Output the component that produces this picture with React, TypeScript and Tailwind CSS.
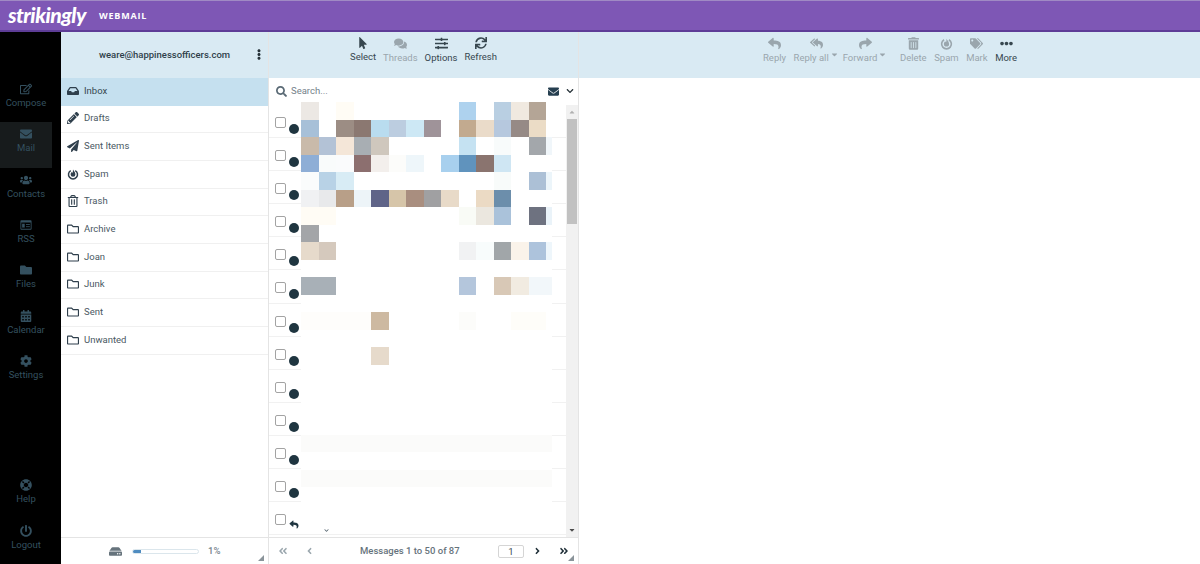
import React from "react";
import {
  FaRegEdit, FaEnvelope, FaUsers, FaHdd, FaFolder, FaCalendarAlt, FaCog, FaLifeRing, FaPowerOff,
  FaInbox, FaPencilAlt, FaPaperPlane, FaRegTrashAlt, FaRegFolder, FaMousePointer, FaComments,
  FaSlidersH, FaSync, FaReply, FaReplyAll, FaShare, FaTrashAlt, FaTags, FaEllipsisH, FaSearch,
  FaChevronDown, FaEllipsisV, FaAngleDoubleLeft, FaAngleLeft, FaAngleRight, FaAngleDoubleRight, FaCaretDown, FaCaretUp,
} from "react-icons/fa";

const SpamIcon = ({ className = "" }: { className?: string }) => (
  <svg viewBox="0 0 16 16" className={className} fill="none">
    <path d="M5 3.4A6 6 0 1 0 11 3.4" stroke="currentColor" strokeWidth="2" />
    <path d="M8 2C9 4 11.2 5.4 11.2 8.6A3.2 3.2 0 0 1 4.8 8.6C4.8 7 5.6 6 6.4 5.2C6.8 6 7.2 6.2 7.6 6.2C8 5 7.8 3.4 8 2Z" fill="currentColor" />
  </svg>
);

const RssIcon = ({ className = "" }: { className?: string }) => (
  <svg viewBox="0 0 14 12" className={className}>
    <path fillRule="evenodd" fill="currentColor" d="M1.5 0.5H12.5A1 1 0 0 1 13.5 1.5V10.5A1 1 0 0 1 12.5 11.5H1.5A1 1 0 0 1 0.5 10.5V1.5A1 1 0 0 1 1.5 0.5ZM1.5 3V10.5H12.5V3Z" />
    <rect x="2.5" y="4.5" width="3" height="4.5" fill="currentColor" />
    <rect x="7" y="5" width="4.5" height="1" fill="currentColor" />
    <rect x="7" y="7.5" width="4.5" height="1" fill="currentColor" />
  </svg>
);

const Handle = () => (
  <svg viewBox="0 0 6 6" className="absolute right-[4px] bottom-[3px] w-[6px] h-[6px] text-[#8a949a]">
    <path d="M6 0V6H0Z" fill="currentColor" />
  </svg>
);

const rail = [
  { l: "Compose", I: FaRegEdit },
  { l: "Mail", I: FaEnvelope, sel: true },
  { l: "Contacts", I: FaUsers },
  { l: "RSS", I: RssIcon },
  { l: "Files", I: FaFolder },
  { l: "Calendar", I: FaCalendarAlt },
  { l: "Settings", I: FaCog },
];

const folders = [
  { l: "Inbox", I: FaInbox, sel: true },
  { l: "Drafts", I: FaPencilAlt },
  { l: "Sent Items", I: FaPaperPlane },
  { l: "Spam", I: SpamIcon },
  { l: "Trash", I: FaRegTrashAlt },
  { l: "Archive", I: FaRegFolder },
  { l: "Joan", I: FaRegFolder },
  { l: "Junk", I: FaRegFolder },
  { l: "Sent", I: FaRegFolder },
  { l: "Unwanted", I: FaRegFolder },
];

const RailItem = ({ l, I, sel }: { l: string; I: any; sel?: boolean }) => (
  <div className={`w-[52px] h-[45.33px] flex flex-col items-center pt-[6px] shrink-0 text-[#34505f] ${sel ? "bg-[#171b1c]" : ""}`}>
    <I className="w-[12px] h-[12px]" />
    <span className="text-[9.5px] leading-[14px] mt-[1px]">{l}</span>
  </div>
);

const Tool = ({ l, I, off, caret, iconClass = "w-[13px] h-[13px]" }: { l: string; I: any; off?: boolean; caret?: boolean; iconClass?: string }) => (
  <div className={`flex flex-col items-center ${off ? "text-[#9aa6ad]" : "text-[#37474f]"}`}>
    <I className={`${iconClass} mt-[5px] mb-[1px]`} />
    <span className="text-[9.5px] leading-[14px] whitespace-nowrap flex items-start">
      {l}
      {caret && <FaCaretDown className="w-[9px] h-[9px] ml-[1px] -mt-[1px]" />}
    </span>
  </div>
);

// One entry per blurred cell: [row, column, colour class]
const cells: [number, number, string][] = [
  [0,0,"bg-[#ece8e4]"],[0,2,"bg-[#fffcf5]"],[0,9,"bg-[#aed2ee]"],[0,11,"bg-[#b9cfe2]"],[0,12,"bg-[#f0e9e0]"],[0,13,"bg-[#b4a596]"],
  [1,0,"bg-[#a7c0d8]"],[1,2,"bg-[#9c8d84]"],[1,3,"bg-[#8b7871]"],[1,4,"bg-[#b9dcef]"],[1,5,"bg-[#bccde0]"],[1,6,"bg-[#cde8f5]"],[1,7,"bg-[#9f9399]"],[1,9,"bg-[#c2aa8f]"],[1,10,"bg-[#eadbc9]"],[1,11,"bg-[#b6c8de]"],[1,12,"bg-[#968a86]"],[1,13,"bg-[#ebdcc6]"],
  [2,0,"bg-[#c9baaa]"],[2,1,"bg-[#b3c2d6]"],[2,2,"bg-[#f4e6d8]"],[2,3,"bg-[#a8aeb3]"],[2,4,"bg-[#cfc7bd]"],[2,9,"bg-[#c5e2f2]"],[2,11,"bg-[#f8fbfb]"],[2,13,"bg-[#a3a7ab]"],[2,14,"bg-[#f0f6fa]"],
  [3,0,"bg-[#8eaed6]"],[3,1,"bg-[#f9fbfb]"],[3,2,"bg-[#fafbfc]"],[3,3,"bg-[#8c6f6f]"],[3,4,"bg-[#f3efec]"],[3,5,"bg-[#fcfcfa]"],[3,6,"bg-[#eef6fa]"],[3,8,"bg-[#a8d0ee]"],[3,9,"bg-[#6093bd]"],[3,10,"bg-[#8a746f]"],[3,11,"bg-[#cfe6f3]"],
  [4,0,"bg-[#fafcfc]"],[4,1,"bg-[#b8d2e6]"],[4,2,"bg-[#d8ecf5]"],[4,11,"bg-[#f8fbfa]"],[4,13,"bg-[#acc0d6]"],[4,14,"bg-[#ecf5fa]"],
  [5,0,"bg-[#f0f1f3]"],[5,1,"bg-[#e8e9eb]"],[5,2,"bg-[#b89f88]"],[5,3,"bg-[#edf4f8]"],[5,4,"bg-[#5f6488]"],[5,5,"bg-[#d6c5a9]"],[5,6,"bg-[#a98e7f]"],[5,7,"bg-[#a0a0a2]"],[5,8,"bg-[#e8dac8]"],[5,10,"bg-[#ebdac4]"],[5,11,"bg-[#6c8eab]"],
  [6,0,"bg-[#fffcf5]"],[6,1,"bg-[#fffcf5]"],[6,9,"bg-[#f9fbf6]"],[6,10,"bg-[#ebe7df]"],[6,11,"bg-[#aac2da]"],[6,13,"bg-[#6e7280]"],[6,14,"bg-[#eaf3f9]"],
  [7,0,"bg-[#a3a5a8]"],
  [8,0,"bg-[#e6dacb]"],[8,1,"bg-[#d5c9bd]"],[8,9,"bg-[#f1f2f3]"],[8,10,"bg-[#f8fcfc]"],[8,11,"bg-[#a1a6a9]"],[8,12,"bg-[#faf3ea]"],[8,13,"bg-[#adc3dc]"],[8,14,"bg-[#eef6fb]"],
  [10,0,"bg-[#a8b0b7]"],[10,1,"bg-[#a8b0b7]"],[10,9,"bg-[#b4c6dc]"],[10,11,"bg-[#d8c8b6]"],[10,12,"bg-[#f1ebe1]"],[10,13,"bg-[#f2f7fa]"],[10,14,"bg-[#f2f7fa]"],
  [12,0,"bg-[#fefdfb]"],[12,1,"bg-[#fefdfb]"],[12,2,"bg-[#fefdfb]"],[12,3,"bg-[#fefdfb]"],[12,4,"bg-[#cdb9a1]"],[12,9,"bg-[#fcfcfa]"],[12,12,"bg-[#fefdf9]"],[12,13,"bg-[#fefdf9]"],
  [14,4,"bg-[#e6dacb]"],
];

const mosaic: (string | null)[] = Array.from({ length: 15 * 24 }, () => null);
cells.forEach(([r, c, k]) => { mosaic[r * 15 + c] = k; });
[19, 21].forEach((r) => { for (let c = 0; c < 15; c++) mosaic[r * 15 + c] = "bg-[#fbfbfa]"; });

const rows = Array.from({ length: 13 }, (_, i) => i);

export default function App() {
  return (
    <div className="w-[1200px] h-[564px] overflow-hidden flex flex-col bg-white font-['Roboto',sans-serif] text-[#37474f]">
      <header className="h-[32px] shrink-0 bg-[#7e57b5] border-t border-t-[#a08ac4] border-b-2 border-b-[#5e3d97] flex items-center pl-[8px]">
        <span className="text-white text-[21px] leading-none italic font-black font-['Lato',sans-serif] tracking-[-0.5px] w-[80px] whitespace-nowrap -mt-[2px]">strikingly</span>
        <span className="text-white text-[9px] font-bold tracking-[0.8px] ml-[11px] font-['Open_Sans',sans-serif]">WEBMAIL</span>
      </header>

      <div className="flex-1 flex min-h-0">
        <nav className="w-[61px] shrink-0 bg-black flex flex-col justify-between pt-[45px] overflow-hidden">
          <div className="flex flex-col">
            {rail.map((r) => <RailItem key={r.l} {...r} />)}
          </div>
          <div className="flex flex-col">
            <RailItem l="Help" I={FaLifeRing} />
            <RailItem l="Logout" I={FaPowerOff} />
          </div>
        </nav>

        <aside className="w-[207px] shrink-0 flex flex-col">
          <div className="h-[46px] shrink-0 bg-[#d9eaf3] flex items-center relative">
            <span className="text-[9.5px] font-medium w-full text-center text-[#2f3f4a]">weare@happinessofficers.com</span>
            <FaEllipsisV className="absolute right-[4px] top-[17px] w-[10px] h-[11px] text-[#263238]" />
          </div>
          <ul className="flex-1 flex flex-col">
            {folders.map(({ l, I, sel }) => (
              <li key={l} className={`h-[27.67px] shrink-0 flex items-center pl-[6px] pb-[1px] text-[9.5px] border-b ${sel ? "bg-[#c5e0ef] border-b-[#c5e0ef]" : "border-b-[#f0f0f0] text-[#4a5963]"}`}>
                <I className="w-[12px] h-[12px] text-[#2f3f4c] mr-[5px]" />
                {l}
              </li>
            ))}
          </ul>
          <div className="h-[27px] shrink-0 border-t border-t-[#e4e4e4] flex items-center pl-[48px] relative text-[#5c6b75]">
            <FaHdd className="w-[13px] h-[13px] text-[#66737c]" />
            <div className="w-[67px] h-[5px] ml-[10px] rounded-full border border-[#dbe6ec] bg-white overflow-hidden">
              <div className="w-[8px] h-full bg-[#4f8cc0]" />
            </div>
            <span className="text-[9.5px] font-medium ml-[9px] text-[#78858d]">1%</span>
            <Handle />
          </div>
        </aside>

        <section className="w-[311px] shrink-0 flex flex-col border-l border-l-[#e4e4e4] border-r border-r-[#e4e4e4]">
          <div className="h-[46px] shrink-0 bg-[#d9eaf3] flex items-start pl-[81px] gap-[7px]">
            <Tool l="Select" I={FaMousePointer} iconClass="w-[10px] h-[12px]" />
            <Tool l="Threads" I={FaComments} off />
            <Tool l="Options" I={FaSlidersH} />
            <Tool l="Refresh" I={FaSync} iconClass="w-[12px] h-[12px]" />
          </div>
          <div className="h-[27px] shrink-0 flex items-center pl-[7px] pr-[3px] pb-[1px] text-[#5a6a75] relative z-10">
            <FaSearch className="w-[11px] h-[11px]" />
            <span className="text-[9.5px] ml-[4px] flex-1 text-[#74818a]">Search...</span>
            <FaEnvelope className="w-[11px] h-[11px] text-[#263f50] mr-[7px]" />
            <FaChevronDown className="w-[8px] h-[8px] text-[#263238] mr-[1px]" />
          </div>
          <div className="flex-1 min-h-0 flex relative">
            <div className="flex-1 min-w-0 overflow-hidden flex flex-col">
              {rows.map((i) => (
                <div key={i} className="h-[33.1px] shrink-0 border-b border-b-[#f1f1f1] flex pl-[6px]">
                  <span className="w-[11px] h-[11px] mt-[12px] rounded-[2px] border border-[#a3a3a3] bg-white shrink-0" />
                  {i < 12 ? (
                    <span className="w-[10px] h-[10px] mt-[19px] ml-[3px] rounded-full bg-[#1f3540] shrink-0" />
                  ) : (
                    <FaReply className="w-[10px] h-[9px] mt-[18px] ml-[3px] text-[#1f3540] shrink-0" />
                  )}
                </div>
              ))}
            </div>
            <div className="absolute left-[32px] -top-[3px] w-[251px] h-[430px] bg-white grid grid-cols-[repeat(14,17.5px)_6px] auto-rows-[17.5px] overflow-hidden">
              {mosaic.map((k, i) => <div key={i} className={k ?? ""} />)}
            </div>
            <FaChevronDown className="absolute left-[55px] bottom-[4px] w-[5px] h-[5px] text-[#55656f]" />
            <div className="w-[12px] shrink-0 bg-[#f1f1f1] flex flex-col items-center justify-between relative z-10">
              <div className="h-[14px] flex items-center"><FaCaretUp className="w-[8px] h-[8px] text-[#b0b0b0]" /></div>
              <div className="w-[10px] h-[105px] bg-[#c1c1c1] absolute top-[14px] left-[1px]" />
              <div className="h-[14px] flex items-center"><FaCaretDown className="w-[8px] h-[8px] text-[#4a4a4a]" /></div>
            </div>
          </div>
          <div className="h-[27px] shrink-0 border-t border-t-[#e4e4e4] flex items-center relative pl-[9px] text-[#9aa6ad]">
            <FaAngleDoubleLeft className="w-[10px] h-[10px]" />
            <FaAngleLeft className="w-[9px] h-[10px] ml-[17px]" />
            <span className="text-[9.5px] font-medium text-[#66737c] ml-[46px] w-[98px] text-center whitespace-nowrap">Messages 1 to 50 of 87</span>
            <span className="w-[26px] h-[13px] ml-[40px] rounded-[2px] border border-[#d5d5d5] text-[9.5px] leading-[11px] text-center text-[#37474f]">1</span>
            <FaAngleRight className="w-[9px] h-[10px] ml-[9px] text-[#1f2f38]" />
            <FaAngleDoubleRight className="w-[10px] h-[10px] ml-[17px] text-[#1f2f38]" />
            <Handle />
          </div>
        </section>

        <main className="flex-1 flex flex-col min-w-0">
          <div className="h-[46px] shrink-0 bg-[#d9eaf3] flex items-start pl-[184px] gap-[7.5px]">
            <Tool l="Reply" I={FaReply} off />
            <div className="mr-[-3.5px]"><Tool l="Reply all" I={FaReplyAll} off caret /></div>
            <div className="mr-[5px]"><Tool l="Forward" I={FaShare} off caret /></div>
            <Tool l="Delete" I={FaTrashAlt} off iconClass="w-[11px] h-[13px]" />
            <Tool l="Spam" I={SpamIcon} off />
            <Tool l="Mark" I={FaTags} off />
            <Tool l="More" I={FaEllipsisH} />
          </div>
          <div className="flex-1 bg-white" />
        </main>
      </div>
    </div>
  );
}
